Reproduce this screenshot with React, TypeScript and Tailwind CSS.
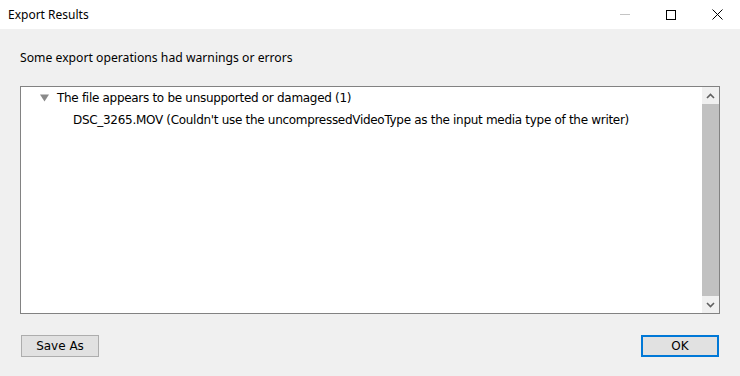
export default function App() {
  return (
    <div
      className="w-[740px] h-[376px] bg-[#f0f0f0] flex flex-col text-black"
      style={{ fontFamily: '"Noto Sans", "Open Sans", sans-serif' }}
    >
      {/* title bar */}
      <div className="h-[29px] bg-white flex items-center shrink-0">
        <span className="pl-[8px] text-[12px] flex-1">Export Results</span>
        <div className="flex h-full">
          <div className="w-[46px] h-full flex items-center justify-center">
            <div className="w-[10px] h-px bg-[#c4c4c4]" />
          </div>
          <div className="w-[46px] h-full flex items-center justify-center">
            <div className="w-[10px] h-[10px] border border-black" />
          </div>
          <div className="w-[46px] h-full flex items-center justify-center">
            <svg width="11" height="11" viewBox="0 0 11 11">
              <path d="M0.5 0.5L10.5 10.5M10.5 0.5L0.5 10.5" stroke="#000" strokeWidth="1" />
            </svg>
          </div>
        </div>
      </div>

      <div className="flex-1 flex flex-col px-[20px]" style={{ fontFamily: '"DejaVu Sans", Verdana, sans-serif' }}>
        <div className="pt-[20px] text-[12.2px] h-[57px] leading-[18px]" style={{ fontFamily: '"Noto Sans", sans-serif' }}>
          Some export operations had warnings or errors
        </div>

        {/* list */}
        <div className="w-[700px] h-[228px] border border-[#828282] bg-white flex">
          <div className="flex-1 pt-0 text-[12px] leading-[22px] tracking-[-0.3px]">
            <div className="flex items-center pl-[19px]">
              <svg width="9" height="8" viewBox="0 0 9 8" className="mr-[8px]">
                <path d="M0 0.5H9L4.5 7.5Z" fill="#8a8a8a" />
              </svg>
              <span>The file appears to be unsupported or damaged (1)</span>
            </div>
            <div className="pl-[52px]">
              DSC_3265.MOV (Couldn't use the uncompressedVideoType as the input media type of the writer)
            </div>
          </div>
          <div className="w-[17px] flex flex-col bg-[#f0f0f0]">
            <div className="h-[17px] flex items-center justify-center">
              <svg width="9" height="6" viewBox="0 0 9 6">
                <path d="M1 5L4.5 1.5L8 5" stroke="#606060" strokeWidth="1.6" fill="none" />
              </svg>
            </div>
            <div className="flex-1 bg-[#c1c1c1]" />
            <div className="h-[17px] flex items-center justify-center">
              <svg width="9" height="6" viewBox="0 0 9 6">
                <path d="M1 1L4.5 4.5L8 1" stroke="#606060" strokeWidth="1.6" fill="none" />
              </svg>
            </div>
          </div>
        </div>

        {/* buttons */}
        <div className="flex justify-between mt-[21px] px-[1px]" style={{ fontFamily: '"DejaVu Sans", sans-serif' }}>
          <button className="w-[78px] h-[22px] bg-[#e1e1e1] border border-[#adadad] text-[12px]">
            Save As
          </button>
          <button className="w-[78px] h-[22px] bg-[#e1e1e1] border-2 border-[#0078d7] text-[12px]">
            OK
          </button>
        </div>
      </div>
    </div>
  );
}
